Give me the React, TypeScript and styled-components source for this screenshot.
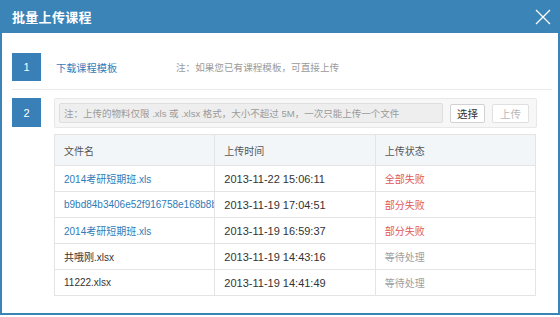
import React from "react";
import styled, { createGlobalStyle } from "styled-components";

const Global = createGlobalStyle`
  html, body { margin: 0; padding: 0; background: #ffffff; }
  body { font-family: "Liberation Sans", "Noto Sans CJK SC", sans-serif; }
  #root { width: 560px; height: 317px; }
`;

const Dialog = styled.div`
  width: 560px;
  height: 315px;
  box-sizing: border-box;
  display: flex;
  flex-direction: column;
  border: 2px solid #3b84b8;
  border-top: none;
  background: #ffffff;
`;

const Header = styled.div`
  height: 33px;
  margin: 0 -2px;
  background: #3b84b8;
  display: flex;
  align-items: center;
  justify-content: space-between;
  padding: 0 9px 0 12px;
`;

const Title = styled.div`
  color: #ffffff;
  font-size: 13px;
  font-weight: bold;
  font-family: "Noto Sans CJK SC", sans-serif;
  letter-spacing: 0.3px;
`;

const Close = styled.button`
  border: none;
  background: transparent;
  padding: 0;
  width: 16px;
  height: 16px;
  display: flex;
  cursor: pointer;
`;

const Body = styled.div`
  flex: 1;
  padding: 20px 6px 0 10px;
  display: flex;
  flex-direction: column;
`;

const StepRow = styled.div<{ $align?: string }>`
  display: flex;
  align-items: ${(p) => p.$align || "center"};
  margin-right: 2px;
`;

const StepNum = styled.div<{ $h: number }>`
  width: 29px;
  height: ${(p) => p.$h}px;
  flex: none;
  background: #3a80b8;
  color: #ffffff;
  font-size: 11px;
  display: flex;
  align-items: center;
  justify-content: center;
`;

const Link = styled.a`
  color: #2f7bb8;
  font-size: 10.2px;
  text-decoration: none;
  margin-left: 15px;
  width: 120px;
  font-family: "Noto Sans CJK SC", sans-serif;
`;

const Note = styled.span`
  color: #9a9a9a;
  font-size: 9.6px;
  font-family: "Noto Sans CJK SC", sans-serif;
`;

const Separator = styled.div`
  height: 1px;
  background: #ececec;
  margin: 8px 0 8px 0;
`;

const Content = styled.div`
  margin-left: 13px;
  width: 483px;
  display: flex;
  flex-direction: column;
  gap: 6px;
`;

const UploadBar = styled.div`
  height: 30px;
  box-sizing: border-box;
  background: #f7f7f7;
  border: 1px solid #e8e8e8;
  border-radius: 2px;
  display: flex;
  align-items: center;
  padding: 0 6px 0 4px;
  gap: 7px;
`;

const FakeInput = styled.div`
  width: 384px;
  height: 20px;
  box-sizing: border-box;
  background: #eeeeee;
  border: 1px solid #dedede;
  border-radius: 2px;
  display: flex;
  align-items: center;
  padding-left: 4px;
  color: #9a9a9a;
  font-size: 9.5px;
  white-space: nowrap;
  overflow: hidden;
`;

const Btn = styled.button<{ $disabled?: boolean }>`
  height: 19px;
  width: ${(p) => (p.$disabled ? "37px" : "35px")};
  box-sizing: border-box;
  background: #ffffff;
  border: 1px solid ${(p) => (p.$disabled ? "#e0e0e0" : "#d2d2d2")};
  border-radius: 2px;
  font-size: 10.5px;
  font-family: "Noto Sans CJK SC", sans-serif;
  color: ${(p) => (p.$disabled ? "#b8b8b8" : "#333333")};
  padding: 0;
  display: flex;
  align-items: center;
  justify-content: center;
`;

const Table = styled.table`
  width: 482px;
  border-collapse: collapse;
  table-layout: fixed;
  border: 1px solid #e4e4e4;
`;

const Th = styled.th`
  height: 30px;
  background: #f3f6f9;
  border: 1px solid #e4e4e4;
  text-align: left;
  font-weight: normal;
  font-size: 10px;
  color: #555555;
  padding: 0 0 0 9px;
  font-family: "Noto Sans CJK SC", sans-serif;
`;

const Td = styled.td<{ $color?: string; $size?: number }>`
  height: 25px;
  border: 1px solid #e4e4e4;
  padding: 0 0 0 9px;
  font-size: ${(p) => p.$size || 10}px;
  color: ${(p) => p.$color || "#333333"};
  white-space: nowrap;
  overflow: hidden;
  text-overflow: clip;
`;

type Row = { name: string; link: boolean; time: string; status: string; kind: "fail" | "wait" };

const rows: Row[] = [
  { name: "2014考研短期班.xls", link: true, time: "2013-11-22 15:06:11", status: "全部失败", kind: "fail" },
  { name: "b9bd84b3406e52f916758e168b8b", link: true, time: "2013-11-19 17:04:51", status: "部分失败", kind: "fail" },
  { name: "2014考研短期班.xls", link: true, time: "2013-11-19 16:59:37", status: "部分失败", kind: "fail" },
  { name: "共哦刚.xlsx", link: false, time: "2013-11-19 14:43:16", status: "等待处理", kind: "wait" },
  { name: "11222.xlsx", link: false, time: "2013-11-19 14:41:49", status: "等待处理", kind: "wait" },
];

export default function App() {
  return (
    <>
      <Global />
      <Dialog>
        <Header>
          <Title>批量上传课程</Title>
          <Close aria-label="close">
            <svg width="16" height="16" viewBox="0 0 16 16">
              <path d="M1 1 L15 15 M15 1 L1 15" stroke="#ffffff" strokeWidth="1.3" fill="none" />
            </svg>
          </Close>
        </Header>
        <Body>
          <StepRow>
            <StepNum $h={28}>1</StepNum>
            <Link href="#">下载课程模板</Link>
            <Note>注：如果您已有课程模板，可直接上传</Note>
          </StepRow>
          <Separator />
          <StepRow $align="flex-start">
            <StepNum $h={29}>2</StepNum>
            <Content>
              <UploadBar>
                <FakeInput>注：上传的物料仅限 .xls 或 .xlsx 格式，大小不超过 5M，一次只能上传一个文件</FakeInput>
                <Btn>选择</Btn>
                <Btn $disabled>上传</Btn>
              </UploadBar>
              <Table>
                <thead>
                  <tr>
                    <Th>文件名</Th>
                    <Th>上传时间</Th>
                    <Th>上传状态</Th>
                  </tr>
                </thead>
                <tbody>
                  {rows.map((r, i) => (
                    <tr key={i}>
                      <Td $color={r.link ? "#2f7bb8" : "#333333"}>{r.name}</Td>
                      <Td $size={11}>{r.time}</Td>
                      <Td $color={r.kind === "fail" ? "#e0575a" : "#a0a0a0"} $size={10}>
                        {r.status}
                      </Td>
                    </tr>
                  ))}
                </tbody>
              </Table>
            </Content>
          </StepRow>
        </Body>
      </Dialog>
    </>
  );
}
